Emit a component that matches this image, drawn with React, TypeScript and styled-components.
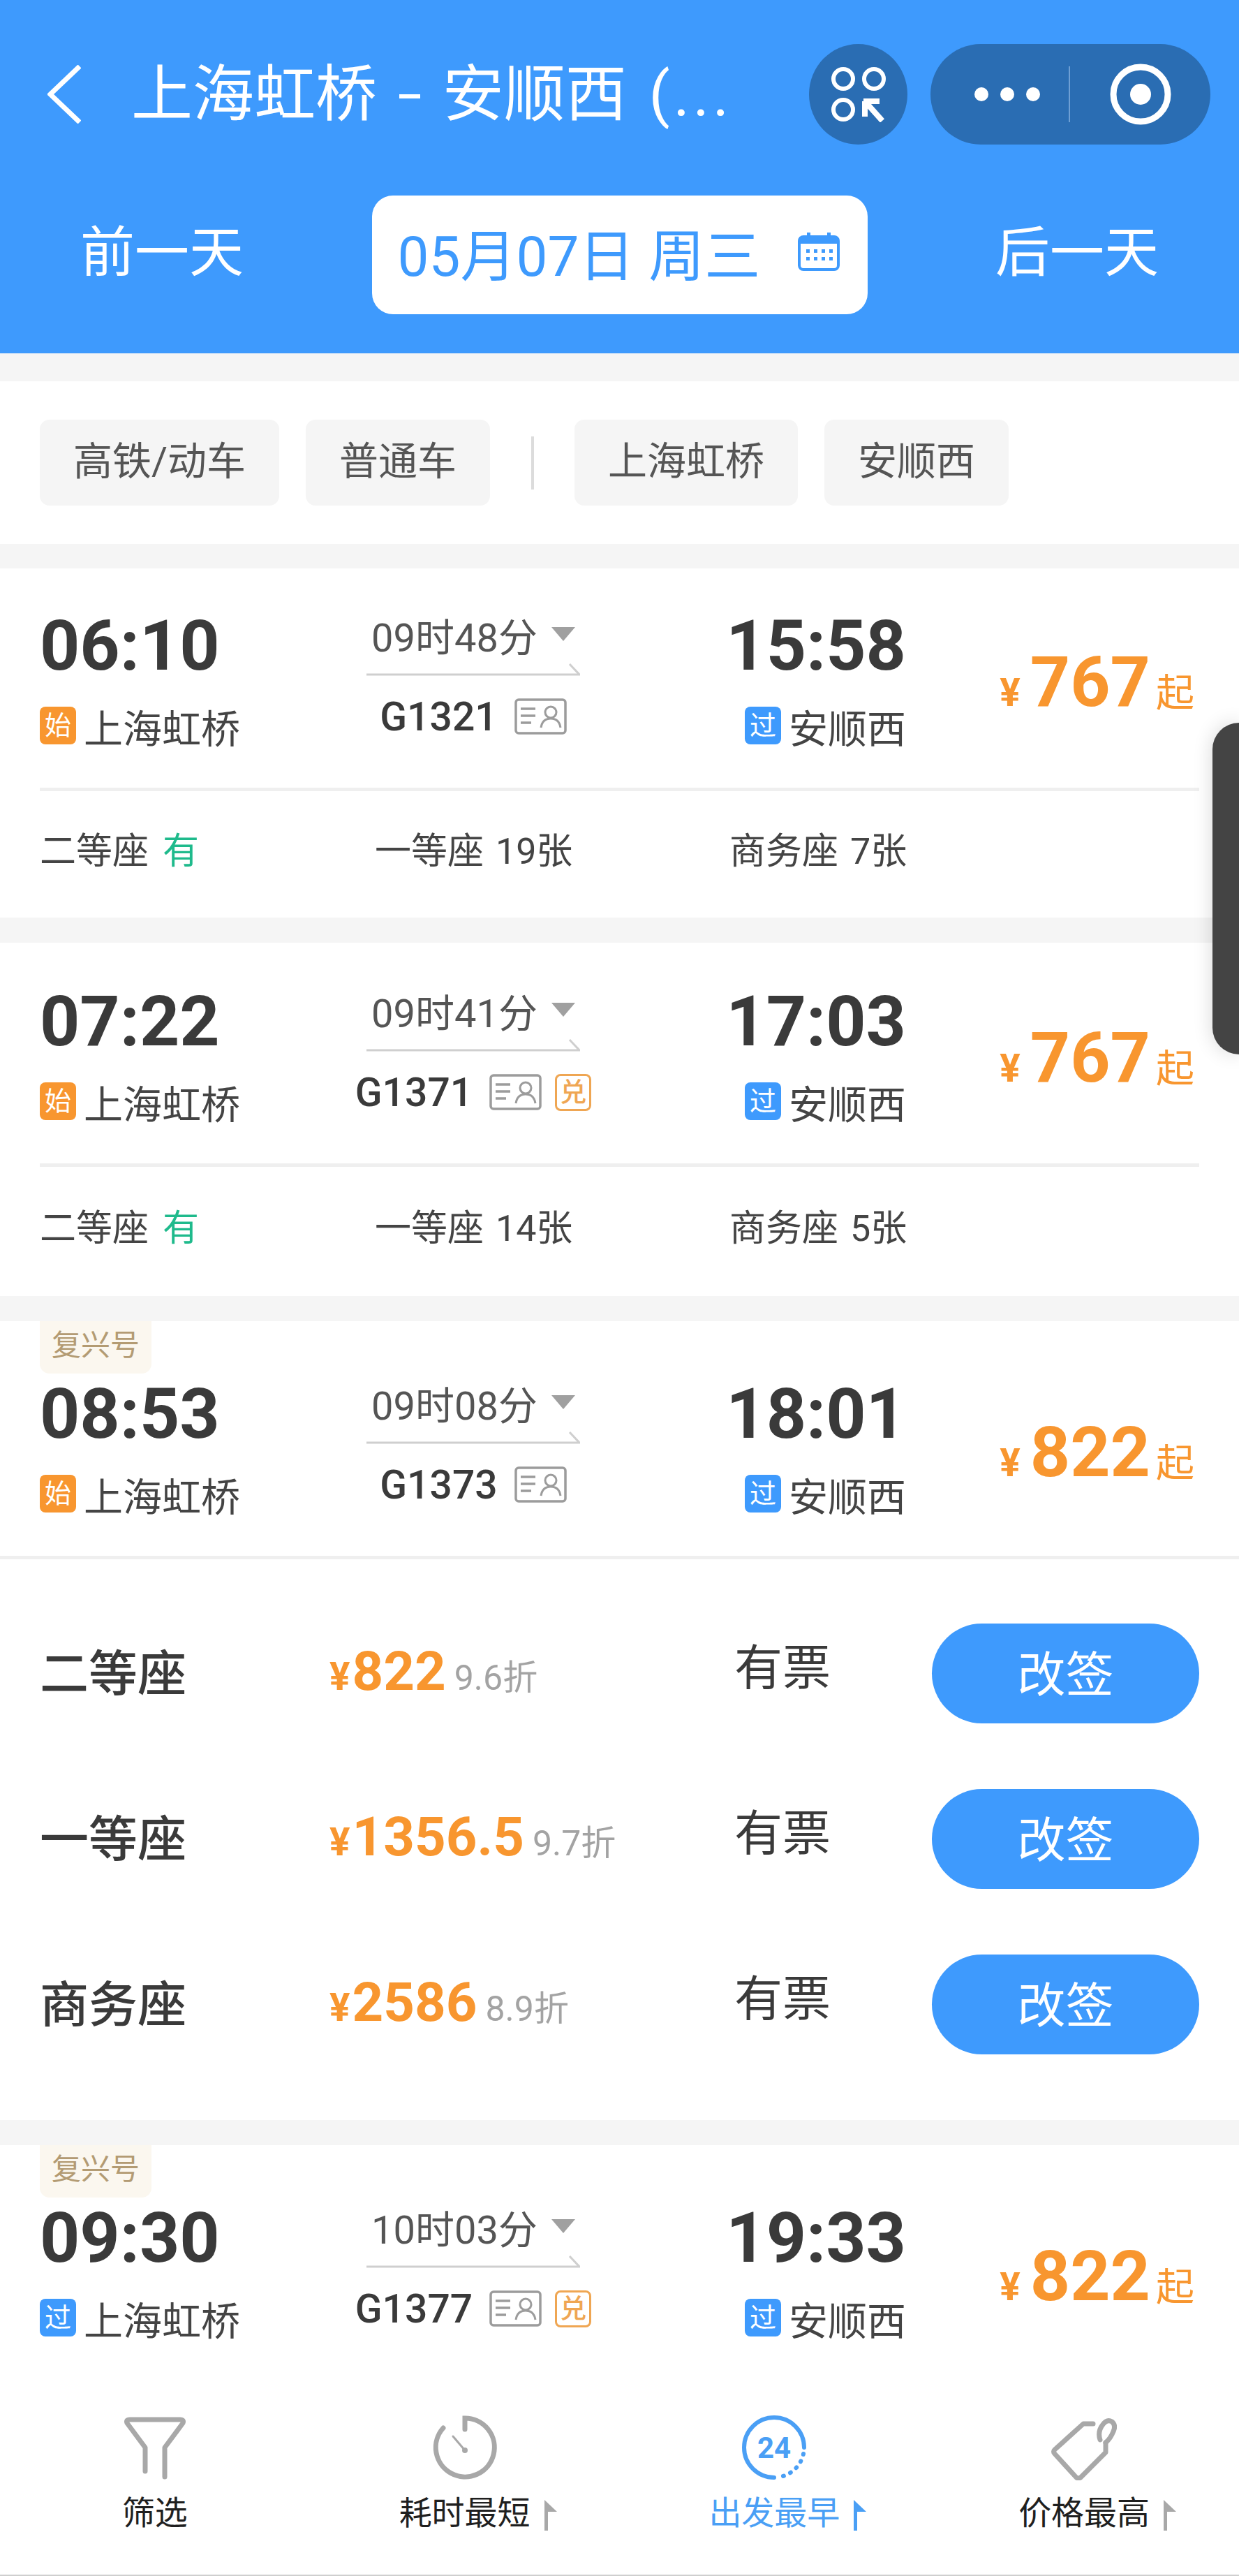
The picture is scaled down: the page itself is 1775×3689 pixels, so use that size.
import React from 'react'
import styled, { createGlobalStyle } from 'styled-components'

const BLUE = '#3e9afd'
const ORANGE = '#f8962f'
const TEXT = '#3a3a3a'
const GREY = '#a8a8a8'

const GlobalStyle = createGlobalStyle`
  html, body { margin: 0; padding: 0; background: #f5f5f5; }
  * { box-sizing: border-box; }
  body { font-family: Roboto, "Noto Sans CJK SC", sans-serif; }
`

const Page = styled.div`
  position: relative;
  width: 1775px;
  height: 3689px;
  display: flex;
  flex-direction: column;
  overflow: hidden;
  background: #f5f5f5;
`

const Header = styled.header`
  height: 506px;
  flex-shrink: 0;
  background: ${BLUE};
  color: #fff;
`

const TopBar = styled.div`
  display: flex;
  align-items: center;
  padding: 63px 41px 0 68px;
  height: 207px;
`

const Title = styled.div`
  flex: 1;
  margin-left: 72px;
  font-size: 88px;
  line-height: 144px;
  word-spacing: 10px;
  white-space: nowrap;
`

const TitleDash = styled.span`
  display: inline-block;
  width: 30px;
  height: 6px;
  background: #fff;
  vertical-align: 24px;
`

const TitleEnd = styled.span`
  letter-spacing: 5px;
`

const CapsuleRound = styled.div`
  width: 141px;
  height: 144px;
  margin-right: 33px;
  border-radius: 50%;
  background: #2a6db3;
  display: flex;
  align-items: center;
  justify-content: center;
`

const Capsule = styled.div`
  width: 401px;
  height: 144px;
  border-radius: 72px;
  background: #2a6db3;
  display: flex;
  align-items: center;
  justify-content: center;
`

const DateRow = styled.div`
  display: flex;
  align-items: center;
  justify-content: space-between;
  padding: 0 115px;
  margin-top: 73px;
  height: 170px;
`

const DayLink = styled.div`
  font-size: 78px;
  line-height: 100px;
  padding-bottom: 4px;
`

const DatePill = styled.div`
  width: 710px;
  height: 170px;
  border-radius: 30px;
  background: #fff;
  color: ${BLUE};
  font-size: 80px;
  display: flex;
  align-items: center;
  padding: 0 0 10px 37px;
  gap: 54px;
`

const FilterBand = styled.section`
  margin-top: 40px;
  height: 233px;
  background: #fff;
  display: flex;
  align-items: center;
  padding: 0 57px;
  flex-shrink: 0;
`

const Chip = styled.div`
  height: 123px;
  padding: 0 48px;
  margin-right: 38px;
  border-radius: 14px;
  background: #f5f5f5;
  color: #555;
  font-size: 56px;
  line-height: 120px;
  white-space: nowrap;
`

const ChipSep = styled.div`
  width: 4px;
  height: 76px;
  background: #dcdcdc;
  margin: 0 58px 0 21px;
`

const List = styled.main`
  flex: 1;
  min-height: 0;
  overflow: hidden;
  padding-top: 35px;
  display: flex;
  flex-direction: column;
  gap: 36px;
`

const Card = styled.article`
  position: relative;
  flex-shrink: 0;
  background: #fff;
`

const Tag = styled.div`
  position: absolute;
  left: 57px;
  top: 0;
  width: 160px;
  height: 75px;
  border-radius: 0 0 14px 14px;
  background: #fbf7ef;
  color: #b39b73;
  font-size: 42px;
  line-height: 70px;
  text-align: center;
`

const Head = styled.div<{ $tagged?: boolean; $shift: number }>`
  height: ${p => (p.$tagged ? 336 : 314) + p.$shift}px;
  padding: ${p => (p.$tagged ? 83 : 61) + p.$shift}px 57px 0;
  display: grid;
  grid-template-columns: 468px 306px 467px 1fr;
`

const Rule = styled.div<{ $inset?: boolean }>`
  height: 5px;
  margin: ${p => (p.$inset ? '0 57px' : '0')};
  background: #efefef;
`

const Stop = styled.div<{ $end?: boolean }>`
  display: flex;
  flex-direction: column;
  align-items: ${p => (p.$end ? 'flex-end' : 'flex-start')};
`

const Time = styled.div`
  font-size: 100px;
  line-height: 100px;
  font-weight: 700;
  color: ${TEXT};
`

const Station = styled.div`
  display: flex;
  align-items: center;
  gap: 11px;
  margin-top: 29px;
  height: 70px;
  font-size: 56px;
  color: #444;
`

const StopBadge = styled.span<{ $kind: string }>`
  width: 52px;
  height: 54px;
  border-radius: 8px;
  background: ${p => (p.$kind === '始' ? ORANGE : BLUE)};
  color: #fff;
  font-size: 38px;
  line-height: 54px;
  text-align: center;
`

const Middle = styled.div`
  display: flex;
  flex-direction: column;
  align-items: center;
`

const Duration = styled.div`
  display: flex;
  align-items: center;
  gap: 20px;
  height: 66px;
  font-size: 56px;
  color: #555;
`

const Triangle = styled.span`
  width: 0;
  height: 0;
  border-left: 17px solid transparent;
  border-right: 17px solid transparent;
  border-top: 20px solid #a0a0a0;
`

const TrainRow = styled.div`
  display: flex;
  align-items: center;
  height: 60px;
  margin-top: 27px;
  font-size: 57px;
  font-weight: 500;
  color: ${TEXT};
`

const ExchangeBadge = styled.span`
  width: 52px;
  height: 53px;
  margin-left: 19px;
  border: 3px solid #efa653;
  border-radius: 8px;
  color: #efa653;
  font-size: 38px;
  line-height: 46px;
  text-align: center;
`

const Price = styled.div<{ $tagged?: boolean }>`
  display: flex;
  align-items: baseline;
  justify-content: flex-end;
  padding: ${p => (p.$tagged ? 55 : 52)}px 7px 0 0;
  color: ${ORANGE};
  font-size: 55px;
  line-height: 100px;
`

const Yen = styled.span<{ $small?: boolean }>`
  font-weight: 700;
  font-size: 55px;
  margin-right: ${p => (p.$small ? 3 : 14)}px;
`

const Amount = styled.span`
  font-size: 100px;
  font-weight: 700;
  margin-right: 8px;
`

const SeatSummary = styled.div<{ $extra: number }>`
  height: ${p => 181 + p.$extra}px;
  padding: 0 57px 18px;
  display: grid;
  grid-template-columns: 480px 508px 1fr;
  align-items: center;
  font-size: 52px;
  word-spacing: 4px;
  color: #444;
`

const Available = styled.span`
  color: #1fba8c;
  margin-left: 20px;
`

const SeatList = styled.div`
  padding: 45px 57px 47px;
`

const SeatRow = styled.div`
  height: 237px;
  display: grid;
  grid-template-columns: 415px 580px 283px 1fr;
  align-items: center;
  color: ${TEXT};
`

const SeatName = styled.div`
  font-size: 70px;
  font-weight: 500;
  padding-bottom: 10px;
`

const SeatPrice = styled.div`
  display: flex;
  align-items: baseline;
  color: ${ORANGE};
  padding-bottom: 6px;
`

const SeatAmount = styled.span`
  font-size: 78px;
  font-weight: 700;
`

const Discount = styled.span`
  font-size: 50px;
  margin-left: 12px;
  color: #a3a3a3;
`

const Ticket = styled.div`
  font-size: 69px;
  padding-bottom: 28px;
`

const Change = styled.button`
  width: 383px;
  height: 143px;
  border: 0;
  border-radius: 72px;
  background: ${BLUE};
  color: #fff;
  font: inherit;
  font-size: 69px;
  padding: 0 0 8px;
`

const TabBar = styled.nav`
  height: 289px;
  flex-shrink: 0;
  background: #fff;
  border-bottom: 2px solid #cfcfcf;
  display: grid;
  grid-template-columns: repeat(4, 1fr);
  padding-top: 58px;
`

const Tab = styled.div`
  display: flex;
  flex-direction: column;
  align-items: center;
`

const TabIcon = styled.div`
  height: 94px;
  display: flex;
  align-items: center;
  justify-content: center;
`

const TabLabel = styled.div<{ $active?: boolean }>`
  position: relative;
  margin-top: 14px;
  font-size: 47px;
  line-height: 66px;
  color: ${p => (p.$active ? '#4a9ff5' : '#1f1f1f')};
`

const SortMark = styled.span`
  position: absolute;
  left: calc(100% + 20px);
  top: 14px;
  display: flex;
`

const SideHandle = styled.div`
  position: absolute;
  right: 0;
  top: 1035px;
  width: 38px;
  height: 475px;
  border-radius: 40px 0 0 40px;
  background: #444;
  box-shadow: 0 0 28px rgba(0, 0, 0, 0.16);
`

const BackIcon = () => (
  <svg width="48" height="84" viewBox="0 0 48 84">
    <path d="M46 2 L4 42 L46 82" fill="none" stroke="#fff" strokeWidth="7" />
  </svg>
)

const AppsIcon = () => (
  <svg width="80" height="80" viewBox="0 0 80 80" fill="none" stroke="#fff" strokeWidth="6">
    <circle cx="18" cy="18" r="14" />
    <circle cx="62" cy="18" r="14" />
    <circle cx="18" cy="62" r="14" />
    <path d="M49 50 V72 M47 50 H70 M49 50 L74 78" strokeWidth="8" />
  </svg>
)

const MoreIcon = () => (
  <svg width="200" height="84" viewBox="0 0 200 84" fill="#fff">
    <ellipse cx="16" cy="42" rx="10" ry="10" />
    <ellipse cx="53" cy="42" rx="10" ry="10" />
    <ellipse cx="90" cy="42" rx="10" ry="10" />
    <rect x="141" y="2" width="2" height="80" fill="#6e9fd4" />
  </svg>
)

const RecordIcon = () => (
  <svg width="88" height="88" viewBox="0 0 88 88">
    <circle cx="44" cy="44" r="39" fill="none" stroke="#fff" strokeWidth="9" />
    <circle cx="44" cy="44" r="15" fill="#fff" />
  </svg>
)

const CalendarIcon = () => (
  <svg width="60" height="56" viewBox="0 0 60 56" fill={BLUE}>
    <rect x="2" y="7" width="56" height="47" rx="6" fill="none" stroke={BLUE} strokeWidth="4" />
    <rect x="2" y="7" width="56" height="10" />
    <rect x="13" y="1" width="5" height="8" />
    <rect x="42" y="1" width="5" height="8" />
    {[13, 24, 35, 46].map(x => (
      <React.Fragment key={x}>
        <rect x={x - 1} y="25" width="5" height="5" />
        <rect x={x - 1} y="36" width="5" height="5" />
      </React.Fragment>
    ))}
  </svg>
)

const IdIcon = () => (
  <svg width="75" height="52" viewBox="0 0 75 52" fill="none" stroke="#9c9c9c" style={{ marginLeft: 24 }}>
    <rect x="2" y="2" width="71" height="48" rx="4" strokeWidth="3.5" />
    <path d="M9 15 H30 M9 25 H30 M9 35 H24" strokeWidth="3.5" />
    <circle cx="52" cy="20" r="8" strokeWidth="3" />
    <path d="M38 42 Q40 29 52 29 Q64 29 66 42" strokeWidth="3" />
  </svg>
)

const RouteArrow = () => (
  <svg width="306" height="20" viewBox="0 0 306 20" style={{ marginTop: 8 }}>
    <path d="M0 17 H305 L291 2" fill="none" stroke="#cfcfcf" strokeWidth="3" />
  </svg>
)

const FilterIcon = () => (
  <svg width="92" height="92" viewBox="0 0 92 92" fill="none" stroke={GREY} strokeWidth="7" strokeLinecap="round" strokeLinejoin="round">
    <path d="M32 80 V46 L6 11 Q4 6 10 6 H82 Q88 6 86 11 L60 46 V88" />
  </svg>
)

const ClockIcon = () => (
  <svg width="94" height="94" viewBox="0 0 94 94" fill="none" stroke={GREY} strokeWidth="7" strokeLinecap="round">
    <path d="M47 21 V5 A42 42 0 1 1 16 19" />
    <path d="M30 31 L47 51" strokeWidth="3" />
    <circle cx="47" cy="51" r="4" fill={GREY} stroke="none" />
  </svg>
)

const EarliestIcon = () => (
  <svg width="94" height="94" viewBox="0 0 94 94" fill="none" stroke="#4a9ff5" strokeWidth="6" strokeLinecap="round">
    <path d="M47 90 A43 43 0 1 1 90 47" />
    <path d="M89 56 A43 43 0 0 1 56 89" strokeDasharray="1 10" />
    <text x="47" y="62" textAnchor="middle" fontSize="42" fontWeight="700" fill="#4a9ff5" stroke="none">24</text>
  </svg>
)

const PriceTagIcon = () => (
  <svg width="94" height="94" viewBox="0 0 94 94" fill="none" stroke={GREY} strokeWidth="7" strokeLinecap="round" strokeLinejoin="round">
    <path d="M60 13 H46 L5 50 Q2 53 5 56 L36 90 Q39 92 42 90 L78 54 V40" />
    <path d="M70 36 Q66 24 74 14 Q80 6 87 10 Q93 15 89 24 Q85 34 78 40" />
  </svg>
)

const SortArrow = ({ color }: { color: string }) => (
  <SortMark>
    <svg width="18" height="44" viewBox="0 0 18 44">
      <path d="M0 0 L18 17 H5 V44 H0 Z" fill={color} />
    </svg>
  </SortMark>
)

interface Train {
  dep: string
  arr: string
  depKind: string
  duration: string
  code: string
  exchange?: boolean
  price: string
  tag?: boolean
  shift?: number
  summary?: [string, string, string]
}

const trains: Train[] = [
  { dep: '06:10', arr: '15:58', depKind: '始', duration: '09时48分', code: 'G1321', price: '767', summary: ['有', '19张', '7张'] },
  { dep: '07:22', arr: '17:03', depKind: '始', duration: '09时41分', code: 'G1371', exchange: true, price: '767', shift: 2, summary: ['有', '14张', '5张'] },
  { dep: '08:53', arr: '18:01', depKind: '始', duration: '09时08分', code: 'G1373', price: '822', tag: true },
  { dep: '09:30', arr: '19:33', depKind: '过', duration: '10时03分', code: 'G1377', exchange: true, price: '822', tag: true },
]

const seats = [
  { name: '二等座', price: '822', discount: '9.6折' },
  { name: '一等座', price: '1356.5', discount: '9.7折' },
  { name: '商务座', price: '2586', discount: '8.9折' },
]

const tabs = [
  { label: '筛选', icon: <FilterIcon /> },
  { label: '耗时最短', icon: <ClockIcon />, sort: GREY },
  { label: '出发最早', icon: <EarliestIcon />, sort: '#4a9ff5', active: true },
  { label: '价格最高', icon: <PriceTagIcon />, sort: GREY },
]

const App = () => {
  return (
    <Page>
      <GlobalStyle />
      <Header>
        <TopBar>
          <BackIcon />
          <Title>上海虹桥 <TitleDash /> 安顺西 <TitleEnd>(...</TitleEnd></Title>
          <CapsuleRound><AppsIcon /></CapsuleRound>
          <Capsule>
            <MoreIcon />
            <RecordIcon />
          </Capsule>
        </TopBar>
        <DateRow>
          <DayLink>前一天</DayLink>
          <DatePill>
            <span>05月07日 周三</span>
            <CalendarIcon />
          </DatePill>
          <DayLink>后一天</DayLink>
        </DateRow>
      </Header>

      <FilterBand>
        <Chip>高铁/动车</Chip>
        <Chip>普通车</Chip>
        <ChipSep />
        <Chip>上海虹桥</Chip>
        <Chip>安顺西</Chip>
      </FilterBand>

      <List>
        {trains.map(t => (
          <Card key={t.code}>
            {t.tag && <Tag>复兴号</Tag>}
            <Head $tagged={t.tag} $shift={t.shift ?? 0}>
              <Stop>
                <Time>{t.dep}</Time>
                <Station>
                  <StopBadge $kind={t.depKind}>{t.depKind}</StopBadge>
                  上海虹桥
                </Station>
              </Stop>
              <Middle>
                <Duration>{t.duration}<Triangle /></Duration>
                <RouteArrow />
                <TrainRow>
                  {t.code}
                  <IdIcon />
                  {t.exchange && <ExchangeBadge>兑</ExchangeBadge>}
                </TrainRow>
              </Middle>
              <Stop $end>
                <Time>{t.arr}</Time>
                <Station>
                  <StopBadge $kind="过">过</StopBadge>
                  安顺西
                </Station>
              </Stop>
              <Price $tagged={t.tag}>
                <Yen>¥</Yen>
                <Amount>{t.price}</Amount>
                起
              </Price>
            </Head>

            {t.summary && (
              <>
                <Rule $inset />
                <SeatSummary $extra={(t.shift ?? 0) * 2}>
                  <div>二等座<Available>{t.summary[0]}</Available></div>
                  <div>一等座 {t.summary[1]}</div>
                  <div>商务座 {t.summary[2]}</div>
                </SeatSummary>
              </>
            )}

            {t.code === 'G1373' && (
              <>
                <Rule />
                <SeatList>
                  {seats.map(s => (
                    <SeatRow key={s.name}>
                      <SeatName>{s.name}</SeatName>
                      <SeatPrice>
                        <Yen $small>¥</Yen>
                        <SeatAmount>{s.price}</SeatAmount>
                        <Discount>{s.discount}</Discount>
                      </SeatPrice>
                      <Ticket>有票</Ticket>
                      <Change>改签</Change>
                    </SeatRow>
                  ))}
                </SeatList>
              </>
            )}
          </Card>
        ))}
      </List>

      <TabBar>
        {tabs.map(tab => (
          <Tab key={tab.label}>
            <TabIcon>{tab.icon}</TabIcon>
            <TabLabel $active={tab.active}>
              {tab.label}
              {tab.sort && <SortArrow color={tab.sort} />}
            </TabLabel>
          </Tab>
        ))}
      </TabBar>

      <SideHandle />
    </Page>
  )
}

export default App
